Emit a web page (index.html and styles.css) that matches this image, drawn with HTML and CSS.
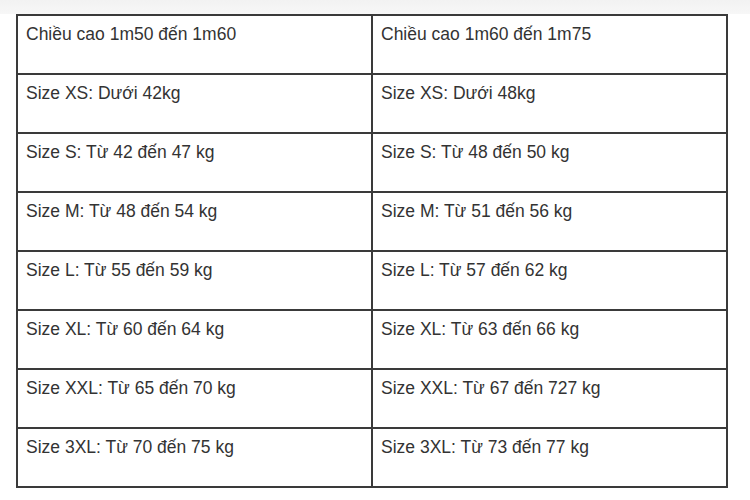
FILE: index.html
```html
<!DOCTYPE html>
<html>
<head>
<meta charset="utf-8">
<link rel="stylesheet" href="styles.css">
</head>
<body>
<div class="topband"></div>
<div class="wrap">
<table class="size-table">
<tr><td>Chiều cao 1m50 đến 1m60</td><td>Chiều cao 1m60 đến 1m75</td></tr>
<tr><td>Size XS: Dưới 42kg</td><td>Size XS: Dưới 48kg</td></tr>
<tr><td>Size S: Từ 42 đến 47 kg</td><td>Size S: Từ 48 đến 50 kg</td></tr>
<tr><td>Size M: Từ 48 đến 54 kg</td><td>Size M: Từ 51 đến 56 kg</td></tr>
<tr><td>Size L: Từ 55 đến 59 kg</td><td>Size L: Từ 57 đến 62 kg</td></tr>
<tr><td>Size XL: Từ 60 đến 64 kg</td><td>Size XL: Từ 63 đến 66 kg</td></tr>
<tr><td>Size XXL: Từ 65 đến 70 kg</td><td>Size XXL: Từ 67 đến 727 kg</td></tr>
<tr><td>Size 3XL: Từ 70 đến 75 kg</td><td>Size 3XL: Từ 73 đến 77 kg</td></tr>
</table>
</div>
</body>
</html>
```
FILE: styles.css
```css
html, body {
  margin: 0;
  padding: 0;
  background: #ffffff;
  width: 750px;
  height: 500px;
  overflow: hidden;
}
.topband {
  height: 14px;
  background: linear-gradient(#f2f2f2, #f7f7f7);
}
.wrap {
  padding-left: 16px;
}
.size-table {
  border-collapse: collapse;
  width: 712px;
  table-layout: fixed;
  font-family: "Liberation Sans", Arial, sans-serif;
  font-size: 17.5px;
  color: #333333;
}
.size-table td {
  border: 2px solid #3a3a3a;
  padding: 8px 9px 0 8px;
  vertical-align: top;
  box-sizing: border-box;
  height: 59px;
}
```
